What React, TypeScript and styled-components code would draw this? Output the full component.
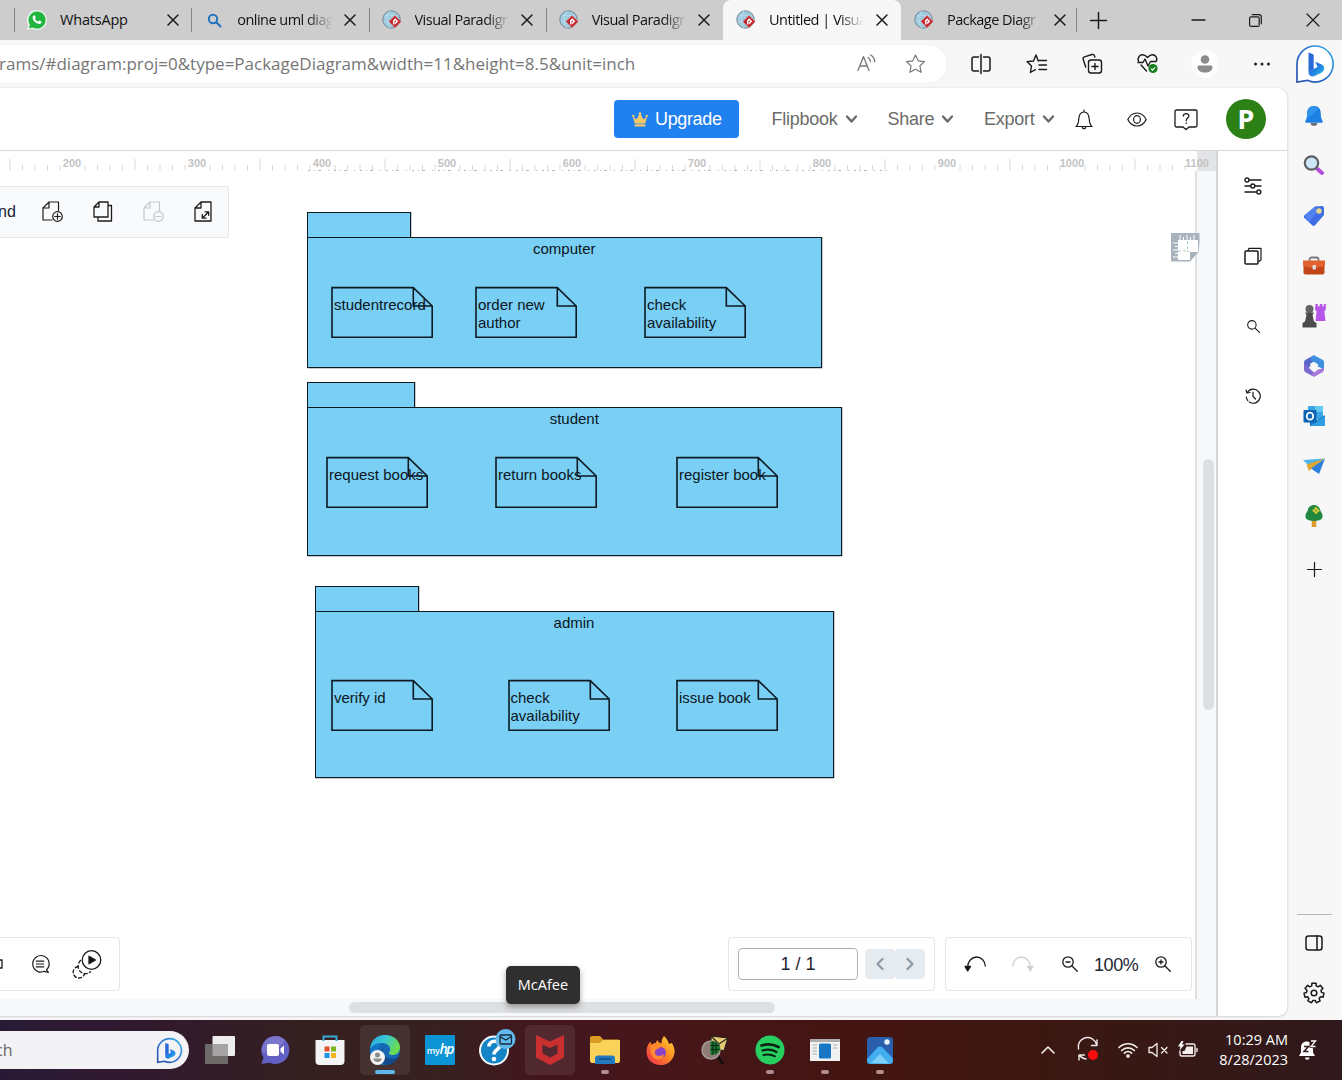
import React from "react";
import styled, { createGlobalStyle, css } from "styled-components";

const ui = `"Open Sans", "Noto Sans", sans-serif`;
const arial = `"Liberation Sans", Arial, sans-serif`;

const GlobalStyle = createGlobalStyle`
  * { box-sizing: border-box; }
  body { margin: 0; overflow: hidden; background: #f7f7f7; }
  svg { display: block; flex: none; overflow: visible; }
`;

/* ---------- window ---------- */

const Window = styled.div`
  width: 1342px;
  height: 1080px;
  display: flex;
  flex-direction: column;
  font-family: ${ui};
  color: #111;
  overflow: hidden;
`;

const TabStrip = styled.div`
  height: 40px;
  flex: none;
  display: flex;
  background: #cdcdcd;
`;

const TabEnd = styled.div`
  width: 14px;
  flex: none;
`;

const TabBox = styled.div<{ $active?: boolean; $line?: boolean; $w: number }>`
  width: ${(p) => p.$w}px;
  flex: none;
  display: flex;
  align-items: center;
  padding-left: 13px;
  background: ${(p) => (p.$active ? "#f7f7f7" : "transparent")};
  border-radius: 8px 8px 0 0;
  ${(p) =>
    p.$line &&
    css`
      background: linear-gradient(#868686, #868686) 0 8px / 1px 24px no-repeat;
      border-radius: 0;
    `}
`;

const TabTitle = styled.div<{ $fade?: boolean }>`
  width: 98px;
  margin-left: 13px;
  overflow: hidden;
  white-space: nowrap;
  font-size: 14.5px;
  line-height: 20px;
  letter-spacing: ${(p) => (p.$fade ? -0.52 : -0.2)}px;
  ${(p) => p.$fade && css`mask-image: linear-gradient(90deg, #000 72%, transparent 97%);`}
`;

const TabClose = styled.div`
  margin-left: 9.5px;
`;

const StripTail = styled.div`
  flex: 1;
  display: flex;
  align-items: center;
  padding-left: 12px;
  background: linear-gradient(#868686, #868686) 0 8px / 1px 24px no-repeat;
`;

const Spacer = styled.div<{ $w: number }>`
  width: ${(p) => p.$w}px;
  flex: none;
`;

const AddressRow = styled.div`
  height: 48px;
  flex: none;
  display: flex;
  align-items: center;
`;

const AddressField = styled.div`
  width: 947px;
  height: 38px;
  display: flex;
  align-items: center;
  background: #fff;
  border-radius: 0 19px 19px 0;
  box-shadow: 0 0 2px rgba(0, 0, 0, 0.08);
  color: #767676;
`;

const Url = styled.div`
  width: 858px;
  font-size: 17px;
  white-space: nowrap;
  margin-left: -1px;
  padding-bottom: 2px;
`;

const Slot = styled.div<{ $w: number; $h?: number }>`
  width: ${(p) => p.$w}px;
  ${(p) => p.$h && `height: ${p.$h}px;`}
  flex: none;
  display: flex;
  align-items: center;
  justify-content: center;
`;

const Avatar = styled.div`
  width: 28px;
  height: 28px;
  border-radius: 50%;
  background: #fdfdfd;
  display: flex;
  align-items: center;
  justify-content: center;
`;

const Main = styled.div`
  height: 932px;
  flex: none;
  display: flex;
`;

const Page = styled.div`
  width: 1288px;
  height: 929px;
  background: #fff;
  border-radius: 0 10px 10px 0;
  border-right: 1px solid #e6e6e6;
  border-bottom: 1px solid #dcdcde;
  display: flex;
  flex-direction: column;
  overflow: hidden;
  box-shadow: 0 0 2px rgba(0, 0, 0, 0.15);
`;

const AppHeader = styled.div`
  height: 63px;
  flex: none;
  display: flex;
  align-items: center;
  padding-left: 614px;
  border-bottom: 1px solid #d6d6d6;
  font-family: ${arial};
`;

const Upgrade = styled.button`
  width: 125px;
  height: 38px;
  border: 0;
  border-radius: 4px;
  background: #2180ef;
  color: #fff;
  display: flex;
  align-items: center;
  gap: 7px;
  padding: 0 0 0 18px;
  font: 18px ${arial};
  letter-spacing: -0.35px;
  margin-right: 32.5px;
`;

const MenuButton = styled.div<{ $w: number }>`
  width: ${(p) => p.$w}px;
  flex: none;
  display: flex;
  align-items: center;
  gap: 8px;
  color: #6b6b6b;
  font-size: 18px;
  letter-spacing: -0.25px;
`;

const UserBadge = styled.div`
  width: 40px;
  height: 40px;
  border-radius: 50%;
  background: #2c8016;
  color: #fff;
  font: 700 27px/39px "Noto Sans", sans-serif;
  text-align: center;
`;

const Workspace = styled.div`
  flex: 1;
  display: flex;
  min-height: 0;
`;

const Editor = styled.div`
  width: 1216px;
  flex: none;
  display: grid;
  grid-template-columns: 1195px 21px;
  grid-template-rows: 20px 828px 17px;
`;

const Ruler = styled.div`
  grid-column: 1 / 3;
  display: flex;
  overflow: hidden;
  background: linear-gradient(#e3e4e8, #e3e4e8) right top / 19px 100% no-repeat;
  position: relative;
`;

const RulerTicks = styled.svg`
  position: absolute;
  left: 0;
  top: 0;
`;

const RulerLabels = styled.div`
  display: flex;
  padding-left: 9.5px;
  position: relative;
`;

const RulerLabel = styled.div`
  width: 125px;
  flex: none;
  text-align: center;
  font: 700 11px/24px ${arial};
  color: #c3c3c3;
`;

const Canvas = styled.div`
  position: relative;
  background: #fff;
`;

const VTrack = styled.div`
  background: #f7f8fa;
  border-left: 2px solid #dedfe2;
  padding: 288px 2px 0 6px;
`;

const HTrack = styled.div`
  grid-column: 1 / 3;
  background: #f7f8fa;
  padding: 3px 0 0 349px;
`;

const Thumb = styled.div<{ $w: number; $h: number }>`
  width: ${(p) => p.$w}px;
  height: ${(p) => p.$h}px;
  border-radius: 6px;
  background: #dedfe1;
`;

const SidePanel = styled.div`
  flex: 1;
  border-left: 2px solid #d6d6da;
  padding-left: 1px;
  display: flex;
  flex-direction: column;
  align-items: center;
`;

/* ---------- diagram ---------- */

const PackageShape = styled.div<{ $x: number; $y: number; $w: number }>`
  position: absolute;
  left: ${(p) => p.$x}px;
  top: ${(p) => p.$y}px;
  width: ${(p) => p.$w}px;
`;

const PackageTab = styled.div<{ $w: number }>`
  width: ${(p) => p.$w}px;
  height: 26px;
  background: #7acff5;
  border: 1px solid #0d1a22;
  border-bottom: 0;
  box-shadow: 0.5px 0 0 rgba(13, 26, 34, 0.45);
`;

const PackageBody = styled.div<{ $h: number }>`
  height: ${(p) => p.$h}px;
  margin-top: -1px;
  background: #7acff5;
  border: 1px solid #0d1a22;
  box-shadow: 0.5px 0.5px 0 rgba(13, 26, 34, 0.45);
  position: relative;
  font: 15px/18px ${arial};
  color: #0b161d;
  text-align: center;
  padding-top: 2px;
`;

const NoteShape = styled.div<{ $x: number; $y: number }>`
  position: absolute;
  left: ${(p) => p.$x}px;
  top: ${(p) => p.$y}px;
  width: 102px;
  height: 52px;
  padding: 9px 0 0 3px;
  text-align: left;
  white-space: pre;
`;

const NoteOutline = styled.svg`
  position: absolute;
  left: 0;
  top: 0;
`;

/* ---------- floating bars ---------- */

const FloatBar = styled.div<{ $x: number; $y: number; $w: number; $h: number; $tint?: boolean }>`
  position: absolute;
  left: ${(p) => p.$x}px;
  top: ${(p) => p.$y}px;
  width: ${(p) => p.$w}px;
  height: ${(p) => p.$h}px;
  display: flex;
  align-items: center;
  padding-bottom: ${(p) => (p.$tint ? 1 : 0)}px;
  background: ${(p) => (p.$tint ? "#f9fafc" : "#fff")};
  border: 1px solid #e5e6e8;
  border-radius: ${(p) => (p.$tint ? 0 : 4)}px;
  font-family: ${arial};
  overflow: hidden;
`;

const RulerBadge = styled.svg`
  position: absolute;
  left: 1171px;
  top: 62px;
  z-index: 2;
`;

const BarText = styled.div`
  font-size: 16px;
  width: 30px;
  margin-left: -2px;
  color: #1c2430;
`;

const PageField = styled.div`
  width: 120px;
  height: 32px;
  border: 1px solid #aeb0b4;
  border-radius: 4px;
  margin: 0 7px 0 9px;
  font-size: 18px;
  line-height: 31px;
  text-align: center;
  color: #1d2733;
`;

const PageStep = styled.div`
  width: 30px;
  height: 30px;
  background: #e6ebf0;
  border-radius: 4px;
  display: flex;
  align-items: center;
  justify-content: center;
`;

const ZoomText = styled.div`
  width: 46px;
  margin: 0 4px 0 0;
  font-size: 18px;
  letter-spacing: -0.4px;
  color: #1d2733;
  padding-top: 3px;
`;

/* ---------- browser side bar ---------- */

const EdgeBar = styled.div`
  flex: 1;
  display: flex;
  flex-direction: column;
  align-items: center;
  padding: 3px 2px 0 0;
`;

const EdgeRule = styled.div`
  width: 35px;
  height: 1px;
  flex: none;
  margin-top: 317px;
  margin-bottom: 3px;
  background: #b9b9b9;
`;

/* ---------- task bar ---------- */

const Taskbar = styled.div`
  height: 60px;
  flex: none;
  position: relative;
  display: flex;
  align-items: center;
  background: linear-gradient(90deg, #281a35 0, #31192f 130px, #35201f 320px, #36211f 440px, #43161f 540px, #461618 700px, #431510 890px, #3a1813 1090px, #2f191c 1342px);
  color: #fff;
`;

const SearchBox = styled.div`
  width: 189px;
  height: 38px;
  flex: none;
  margin-right: 6px;
  background: #f3f2f5;
  border-radius: 0 19px 19px 0;
  display: flex;
  align-items: center;
  justify-content: space-between;
  padding: 0 7px 0 0;
  color: #666;
  font-size: 16px;
`;

const SearchText = styled.span`
  margin-left: -5px;
`;

const TaskItem = styled.div<{ $lit?: boolean }>`
  width: 50px;
  height: 50px;
  margin-right: 5px;
  flex: none;
  border-radius: 5px;
  background: ${(p) => (p.$lit ? "rgba(255,255,255,.08)" : "transparent")};
  display: flex;
  align-items: center;
  justify-content: center;
  position: relative;
`;

const RunMark = styled.div<{ $on?: boolean }>`
  position: absolute;
  bottom: 1px;
  left: ${(p) => (p.$on ? 15 : 21)}px;
  width: ${(p) => (p.$on ? 20 : 8)}px;
  height: 4px;
  border-radius: 2px;
  background: ${(p) => (p.$on ? "#5fb8ec" : "#b08d92")};
`;

const Tooltip = styled.div`
  position: absolute;
  left: 506px;
  top: -54px;
  width: 74px;
  height: 38px;
  border-radius: 5px;
  background: #2f2f2f;
  box-shadow: 0 3px 6px rgba(0, 0, 0, 0.35);
  font-size: 14.5px;
  line-height: 38px;
  text-align: center;
`;

const Tray = styled.div`
  margin-left: auto;
  display: flex;
  align-items: center;
`;

const Clock = styled.div`
  width: 80px;
  text-align: right;
  font-size: 14.5px;
  line-height: 20px;
  letter-spacing: 0;
  white-space: nowrap;
`;

/* ---------- icons ---------- */

const stroke = (w = 1.4, c = "#1a1a1a") => ({
  fill: "none",
  stroke: c,
  strokeWidth: w,
  strokeLinecap: "round" as const,
  strokeLinejoin: "round" as const,
});

const Cross = ({ s = 10, w = 1.5 }) => (
  <svg width={s} height={s} viewBox="0 0 10 10" {...stroke(w)}>
    <path d="M0 0l10 10M10 0L0 10" />
  </svg>
);

const WhatsApp = () => (
  <svg width="20" height="20" viewBox="0 0 20 20">
    <path d="M10 0a10 10 0 0 1 0 20 10 10 0 0 1-4.7-1.2L0 20l1.3-5A10 10 0 0 1 10 0z" fill="#e8f6ea" />
    <path d="M10 1.4a8.6 8.6 0 1 1-4.4 16L2 18.3l1-3.5A8.6 8.6 0 0 1 10 1.4z" fill="#1fb53f" />
    <path d="M6.8 5.5c.6-.3 1-.2 1.200.3l.8 1.700c.1.400-.7 1-.8 1.300.7 1.300 1.700 2.200 3.100 2.700.4 0 .9-1.200 1.300-1l1.900.9c.5.400-.1 1.700-.6 2.200-1.200 1-3.600.2-5.400-1.300C6.600 10.900 5.500 9 5.600 7.500c0-.8.500-1.700 1.200-2z" fill="#fff" />
  </svg>
);

const BlueSearch = () => (
  <svg width="14" height="14" viewBox="0 0 14 14" {...stroke(2, "#1f72be")}>
    <circle cx="6" cy="6" r="4.200" />
    <path d="M9.500 9.500l4 4" />
  </svg>
);

const Paradigm = () => (
  <svg width="20" height="20" viewBox="0 0 20 20">
    <circle cx="9.500" cy="9.500" r="8.700" fill="#9ecbe0" stroke="#74858f" strokeWidth="1" />
    <path d="M3 6c4-1 8-1 13 0M2 11c3 1.500 6 1.500 8 1.500M8 1C4 6 4 12 8 18" stroke="#b5dcec" fill="none" />
    <path d="M13 5.300l6.300 6.300-6.300 6.300-6.300-6.300z" fill="#c4282d" stroke="#dcc3c8" strokeWidth=".6" />
    <path d="M11.800 14.500v-3.600L13.200 9.300l2 2-2 2.200" stroke="#fff" strokeWidth="1.500" fill="none" />
  </svg>
);

const ReadAloud = () => (
  <svg width="20" height="18" viewBox="0 0 20 18" {...stroke(1.3, "#777")}>
    <path d="M1 15.500L6.500 1.500 12 15.500M3 11h7M11 2.500c1.500 1 2.300 2.300 2.500 4M13.500 0c2.500 1.300 4 3.500 4.200 6.500" />
  </svg>
);

const starPath = "M10 1l2.700 5.800 6.300.8-4.600 4.400 1.200 6.300L10 15.200l-5.600 3.100 1.200-6.300L1 7.600l6.300-.8z";

const Star = () => (
  <svg width="21" height="20" viewBox="0 0 20 20" {...stroke(1.2, "#777")}>
    <path d={starPath} />
  </svg>
);

const SplitScreen = () => (
  <svg width="20" height="20" viewBox="0 0 20 20" {...stroke(1.5)}>
    <path d="M7.500 3H3a2 2 0 0 0-2 2v10a2 2 0 0 0 2 2h4.500M10 0.500v19M12.500 3H17a2 2 0 0 1 2 2v10a2 2 0 0 1-2 2h-4.500" />
  </svg>
);

const Favorites = () => (
  <svg width="21" height="20" viewBox="0 0 21 20" {...stroke(1.4)}>
    <path d="M12.300 7L10 1 7.500 7 1 7.600l4.500 4.400-1.100 6.500 5-2.800M13 6.500h7.500M13 11h7.500M13 15.500h7.500" />
  </svg>
);

const Collections = () => (
  <svg width="20" height="20" viewBox="0 0 20 20" {...stroke(1.4)}>
    <rect x="6.500" y="6" width="13" height="13" rx="2.500" />
    <path d="M13 9.500v6M10 12.500h6M3.700 13L1.200 5.300a2 2 0 0 1 1.300-2.500L10 .5a2 2 0 0 1 2.500 1.300l.4 1.200" />
  </svg>
);

const Health = () => (
  <svg width="22" height="20" viewBox="0 0 22 20">
    <g {...stroke(1.400)}>
      <path d="M1.500 7.500C0 3 3 .8 5.500 .8 8 .8 9.500 2.500 10.500 3.500 11.500 2.500 13 .8 15.500 .8c3 0 5 3 4 6.200M4 11l5.500 6M1 8.500h5L8 5l3 7 2.500-4.500H19" />
    </g>
    <circle cx="16" cy="14.500" r="4.600" fill="#17801f" />
    <path d="M14 14.600l1.500 1.500 2.600-2.800" stroke="#fff" fill="none" strokeWidth="1.200" />
  </svg>
);

const Person = () => (
  <svg width="16" height="18" viewBox="0 0 16 18" fill="#8b8b8b">
    <circle cx="8" cy="4.500" r="4.300" />
    <path d="M2 10.500h12a1.500 1.500 0 0 1 1.500 1.500c0 3.500-3 5.500-7.500 5.500S.5 15.500.5 12A1.500 1.500 0 0 1 2 10.500z" />
  </svg>
);

const Dots = () => (
  <svg width="18" height="4" viewBox="0 0 18 4" fill="#222">
    <circle cx="2.500" cy="2" r="1.500" /><circle cx="9" cy="2" r="1.500" /><circle cx="15.500" cy="2" r="1.500" />
  </svg>
);

const Bing = ({ s = 38, bg = "#fff", id = "a" }) => (
  <svg width={s} height={s} viewBox="0 0 38 38">
    <defs>
      <linearGradient id={"bo" + id} x1="0" y1="1" x2="1" y2="0">
        <stop offset="0" stopColor="#2a4fae" /><stop offset=".5" stopColor="#2a6fd0" /><stop offset="1" stopColor="#35b5e8" />
      </linearGradient>
      <linearGradient id={"bi" + id} x1="0" y1="0" x2="1" y2="1">
        <stop offset="0" stopColor="#2d6be0" /><stop offset=".5" stopColor="#1f7fe0" /><stop offset="1" stopColor="#37c8ee" />
      </linearGradient>
    </defs>
    <path d="M19.500 1a18 18 0 1 1-8 34.300L1 37V19A18.200 18.200 0 0 1 19.500 1z" fill={bg} stroke={`url(#bo${id})`} strokeWidth={s < 30 ? 2.400 : 1.700} />
    <path d="M12.500 7.500l4.600 1.800c.4.200.6.500.6 1V24l-5.200 3.500z" fill="#2b68d8" />
    <path d="M12.500 27l5.200-3 3.800-2-2.300-5.300 6 2.500c4.200 1.800 3.700 6.500.3 8.500L18 31.300c-2.800 1-5.500-1-5.500-4.300z" fill={`url(#bi${id})`} />
  </svg>
);

const Crown = () => (
  <svg width="16" height="15" viewBox="0 0 18 17" fill="#f3c969">
    <path d="M1 5l4 3.500L9 1l4 7.500L17 5l-2 8H3zM3 14h12v2.500H3z" />
    <circle cx="1.500" cy="4.500" r="1.400" /><circle cx="16.500" cy="4.500" r="1.400" /><circle cx="9" cy="1.800" r="1.500" />
  </svg>
);

const Chevron = ({ d = "M1 1.500l4.500 5 4.500-5", w = 11, h = 8, c = "#6b6b6b", sw = 2.4 }) => (
  <svg width={w} height={h} viewBox={`0 0 ${w} ${h}`} {...stroke(sw, c)}><path d={d} /></svg>
);

const BellLine = () => (
  <svg width="18" height="21" viewBox="0 0 18 21" {...stroke(1.2)}>
    <path d="M9 1v1.500M1 17.500h16c-2-1.500-2.500-3-2.700-7C14 5.500 12 3 9 3s-5 2.500-5.300 7.500c-.2 4-.7 5.500-2.700 7zM7.300 18.500c.5 1.500 2.900 1.500 3.400 0" />
  </svg>
);

const Eye = () => (
  <svg width="20" height="15" viewBox="0 0 20 15" {...stroke(1.2)}>
    <path d="M.8 7.500C3 3 6.500 1 10 1s7 2 9.200 6.500C17 12 13.500 14 10 14S3 12 .8 7.500z" /><ellipse cx="10" cy="7.500" rx="3.400" ry="3.800" />
  </svg>
);

const HelpBox = () => (
  <svg width="24" height="21" viewBox="0 0 24 21" {...stroke(1.3)}>
    <path d="M2.500 1h19A1.500 1.500 0 0 1 23 2.500v14a1.500 1.500 0 0 1-1.500 1.500H15l-3 2.500L9 18H2.500A1.500 1.500 0 0 1 1 16.500v-14A1.500 1.500 0 0 1 2.500 1z" />
    <path d="M9.300 7c0-3.300 5.600-3.300 5.600 0 0 2-2.700 2.200-2.700 4.700M12.200 14v.3" />
  </svg>
);

const Sliders = () => (
  <svg width="18" height="18" viewBox="0 0 18 18" {...stroke(1.4)}>
    <circle cx="3" cy="3" r="2" /><path d="M5.500 3H17M1 9h5.500M11 9h6M1 15h11.500" /><circle cx="8.800" cy="9" r="2" /><circle cx="14.800" cy="15" r="2" />
  </svg>
);

const Layers = () => (
  <svg width="18" height="18" viewBox="0 0 18 18" {...stroke(1.5)}>
    <rect x="1" y="4" width="13" height="13" rx="1" /><path d="M4 3.500L5 1.300h12V13l-2 1.500" strokeWidth="1.200" />
  </svg>
);

const Glass = ({ sign = "", s = 16 }) => (
  <svg width={s} height={s} viewBox="0 0 16 16" {...stroke(1.3)}>
    <circle cx="6" cy="6" r="5.200" /><path d="M10 10l5.300 5.300" /><path d={sign} />
  </svg>
);

const History = () => (
  <svg width="16" height="16" viewBox="0 0 16 16" {...stroke(1.2)}>
    <path d="M2.300 4.500A7 7 0 1 1 1.300 9" strokeDasharray="33 2" /><path d="M1 2l1 3 3-.5M8 4v4.500l2.500 2.500" />
  </svg>
);

const DocIcon = ({ kind }: { kind: "add" | "copy" | "del" | "fit" }) => {
  const c = kind === "del" ? "#c3c5c8" : "#1c1c1c";
  if (kind === "copy")
    return (
      <svg width="20" height="21" viewBox="0 0 20 21" {...stroke(1.3, c)}>
        <path d="M6 1h9v15H1V6zM6 1v5H1M15 4.500h3.500V20H5v-4" />
      </svg>
    );
  if (kind === "fit")
    return (
      <svg width="18" height="21" viewBox="0 0 18 21" {...stroke(1.300, c)}>
        <path d="M7 1h10v19H1V7zM7 1v6H1M8.500 17l6-6M11 10.800h3.700v3.500M8.300 13.500v3.700H12" />
      </svg>
    );
  return (
    <svg width="21" height="21" viewBox="0 0 21 21" {...stroke(1.200, c)}>
      <path d="M16.500 9.500V1H7L1 7v12h9M7 1v6H1" /><circle cx="15.500" cy="15.500" r="4.800" />
      <path d={kind === "add" ? "M12.800 15.500h5.400M15.500 12.800v5.400" : "M12.800 15.500h5.400"} />
    </svg>
  );
};

const Comment = () => (
  <svg width="18" height="18" viewBox="0 0 18 18" {...stroke(1.200)}>
    <path d="M15.500 14.800A8.200 8.200 0 1 0 13.200 16.300L17.500 17.500 15.500 14.800z" />
    <path d="M5.300 6.200h7.500M5.300 9h7.500M5.300 11.800h7.500" />
  </svg>
);

const Present = () => (
  <svg width="29" height="29" viewBox="0 0 29 29" {...stroke(1.300)}>
    <circle cx="19.500" cy="10" r="9.300" /><path d="M17 6.200v7.600l6.500-3.800z" fill="#111" />
    <path d="M8.500 10.500C5 14 5.500 20 9.500 22.500c3 1.800 6.500 1.500 9-.7" strokeDasharray="3 2.500" />
    <path d="M6 16.500A5.800 5.800 0 1 0 12.500 24" strokeDasharray="3 2.500" />
  </svg>
);

const Undo = ({ flip = false }) => (
  <svg width="22" height="16" viewBox="0 0 22 16" {...stroke(1.3, flip ? "#cfd1d4" : "#1b1b1b")}>
    <g transform={flip ? "translate(22 0) scale(-1 1)" : undefined}>
      <path d="M3.500 11C4 5 8 1 12.500 1S21 4.500 21.300 10" /><path d="M1 10.500h5.500L3.700 15z" fill={flip ? "#cfd1d4" : "#111"} />
    </g>
  </svg>
);

const BlueBell = () => (
  <svg width="20" height="22" viewBox="0 0 20 22">
    <path d="M6.500 18h7c0 4-7 4-7 0z" fill="#6b7177" />
    <path d="M10 1c4.500 0 6.700 3 6.700 7 0 4 .6 5.500 2.100 8.300 0 1-.5 1.500-1.500 1.500H2.700c-1 0-1.500-.5-1.500-1.500C2.700 13.500 3.300 12 3.300 8c0-4 2.200-7 6.700-7z" fill="#1c80e2" />
    <path d="M10 1C5.500 1 3.300 4 3.300 8c0 2-.2 3.500-.6 4.700C7 11 13 7 14.500 2.700 13.400 1.600 11.800 1 10 1z" fill="#2f93ee" />
  </svg>
);

const PurpleSearch = () => (
  <svg width="22" height="22" viewBox="0 0 22 22">
    <path d="M14.500 14l4.500 4" stroke="#b44ae0" strokeWidth="4" strokeLinecap="round" />
    <circle cx="8.500" cy="8" r="6.700" fill="#cde6f7" stroke="#5c6065" strokeWidth="2.200" />
  </svg>
);

const Tag = () => (
  <svg width="22" height="22" viewBox="0 0 22 22">
    <path d="M12 1.500L19 1c1 0 2 .8 2 2v7L12 20.300c-.8.900-2 .9-2.800 0L1.500 13c-.9-.8-.9-2 0-2.800z" fill="#3f6de6" />
    <path d="M1.500 10.500L12 1.500l2 6-8 9.500z" fill="#5b8cf5" opacity=".7" /><circle cx="16" cy="6" r="2.700" fill="#ead98c" />
  </svg>
);

const Briefcase = () => (
  <svg width="24" height="20" viewBox="0 0 24 20">
    <path d="M7.500 5V3.500A2 2 0 0 1 9.500 1.500h5a2 2 0 0 1 2 2V5" fill="none" stroke="#74787c" strokeWidth="1.800" />
    <rect x="1.500" y="5" width="21" height="13.500" rx="2" fill="#c3461b" /><path d="M1 4.500h22v5c-6 3-16 3-22 0z" fill="#e2622d" /><rect x="10.500" y="9" width="3.500" height="4.500" rx="1" fill="#ddd" />
  </svg>
);

const Chess = () => (
  <svg width="24" height="24" viewBox="0 0 24 24">
    <path d="M13.500 0h2.300v2.300h2V0h2.500v2.300h1.500V0h2v5.500l-1.500 2 1.300 9.500H13.500l1-9.500-1.500-2z" fill="#b558ea" />
    <circle cx="7.500" cy="5" r="4" fill="#636363" /><path d="M3 8.500h9L10.500 11l1.500 6.500 2.500 1.500v4.500H.500V19L3 17.500 4.500 11z" fill="#4c4c4c" />
  </svg>
);

const Loop365 = () => (
  <svg width="22" height="22" viewBox="0 0 22 22">
    <path d="M11 .3L3 4.500C1.600 5.300 1 6.300 1 7.700V15l6.500-3.500V8.500L14 4.500z" fill="#5868c8" />
    <path d="M8 2l3-1.700 8.500 4.500c1 .6 1.500 1.600 1.500 2.800V14.500l-6-3V9.500L8 5.500z" fill="#3d8fe0" />
    <path d="M1 7.700V14.500c0 1.200.5 2.100 1.500 2.700L9.500 21c1 .6 2 .6 3 0l1.500-.8L7 14z" fill="#7b68d0" />
    <path d="M21 13v1.500c0 1.200-.5 2.100-1.500 2.700L12.500 21c-1 .6-2 .6-3 0L8 20l7-5.500z" fill="#a77bdc" />
    <path d="M7.500 9l3.500-2 3.500 2v4L11 15l-3.500-2z" fill="#f7f7f7" />
  </svg>
);

const Outlook = () => (
  <svg width="22" height="22" viewBox="0 0 22 22">
    <rect x="5" y="1" width="15" height="13" rx="1" fill="#37a5e6" /><path d="M12 1h8v6h-8z" fill="#63c8f2" />
    <path d="M6 10l8 5 8-5v10a1 1 0 0 1-1 1H7z" fill="#1675c2" /><path d="M7 21l15-10v9a1 1 0 0 1-1 1z" fill="#2d9ce0" />
    <rect x="0.500" y="5" width="13" height="12.500" rx="1" fill="#0b64b4" /><ellipse cx="7" cy="11.200" rx="3.200" ry="3.500" fill="none" stroke="#fff" strokeWidth="1.800" />
  </svg>
);

const Plane = () => (
  <svg width="22" height="18" viewBox="0 0 22 18">
    <path d="M0 3L22 1.500 6 9z" fill="#4db3e8" /><path d="M3.500 7.500L22 1.500 9 11l-3 3z" fill="#e0a630" /><path d="M22 1.500L8 11.500l8 5.500z" fill="#2b7fda" />
  </svg>
);

const Tree = () => (
  <svg width="18" height="24" viewBox="0 0 18 24">
    <rect x="6.700" y="15" width="4.600" height="8" fill="#e09c2f" /><path d="M9 1c4 0 6 3 6.500 6 2 2.500 3 6 1 8-2.500 2.500-12.500 2.500-15 0-2-2-1-5.500 1-8C3 4 5 1 9 1z" fill="#23883f" />
    <g fill="#d3cb37"><circle cx="11" cy="4.500" r="1.500" /><circle cx="11" cy="8.500" r="1.500" /><circle cx="9" cy="6.500" r="1.500" /><circle cx="13" cy="6.500" r="1.500" /></g>
  </svg>
);

const Plus = ({ s = 16, w = 1.4 }) => (
  <svg width={s} height={s} viewBox="0 0 16 16" {...stroke(w)}><path d="M8 .5v15M.5 8h15" /></svg>
);

const PanelIcon = () => (
  <svg width="18" height="16" viewBox="0 0 18 16" {...stroke(1.500)}><rect x="1" y="1" width="16" height="14" rx="2.500" /><path d="M12 1v14" /></svg>
);

const gearPath = Array.from({ length: 7 }, (_, i) => {
  const at = (deg: number, r: number) => {
    const a = ((deg + (i * 360) / 7 - 90) * Math.PI) / 180;
    return `${(11 + r * Math.cos(a)).toFixed(2)} ${(11 + r * Math.sin(a)).toFixed(2)}`;
  };
  return `${i ? "L" : "M"}${at(-12, 10)}L${at(12, 10)}L${at(17, 7.5)}L${at(34, 7.5)}`;
}).join("") + "Z";

const Gear = () => (
  <svg width="22" height="22" viewBox="0 0 22 22" {...stroke(1.500)}><path d={gearPath} /><circle cx="11" cy="11" r="2.800" /></svg>
);

const TaskView = () => (
  <svg width="30" height="28" viewBox="0 0 30 28">
    <rect x="7.500" y="0" width="22.500" height="20" rx="1" fill="#eeeded" /><rect x="0" y="8" width="23" height="20" rx="1" fill="#6d6a69" /><path d="M7.500 8H23v12H7.500z" fill="#a5a3a3" />
  </svg>
);

const Chat = () => (
  <svg width="29" height="28" viewBox="0 0 29 28">
    <path d="M14.500 0a14 14 0 1 1-6 26.700L.5 28l2-6.500A14 14 0 0 1 14.500 0z" fill="#6260c2" /><path d="M14.500 0a14 14 0 0 0-13 17C10 16 22 10 24 4a14 14 0 0 0-9.500-4z" fill="#8380d0" opacity=".7" />
    <rect x="6" y="8" width="12" height="12" rx="2" fill="#fff" /><path d="M19.500 12.500L23 9.500v9l-3.500-3z" fill="#fff" />
  </svg>
);

const Store = () => (
  <svg width="30" height="30" viewBox="0 0 30 30">
    <path d="M.5 5h29v21a4 4 0 0 1-4 4h-21a4 4 0 0 1-4-4z" fill="#f4f4f4" /><path d="M8.500 6V1.500h13V6" fill="none" stroke="#38a8db" strokeWidth="2" />
    <path d="M9.500 11.500h5v5h-5z" fill="#e0502e" /><path d="M16 11.500h5v5h-5z" fill="#7ab51d" /><path d="M9.500 18h5v5h-5z" fill="#1d97dd" /><path d="M16 18h5v5h-5z" fill="#f3b31c" />
  </svg>
);

const EdgeLogo = () => (
  <svg width="30" height="30" viewBox="0 0 30 30">
    <defs>
      <linearGradient id="eg" x1="0" y1="0" x2="1" y2=".4"><stop offset="0" stopColor="#2aa5e0" /><stop offset=".5" stopColor="#35c6d5" /><stop offset="1" stopColor="#6bdc51" /></linearGradient>
    </defs>
    <circle cx="15" cy="15" r="15" fill="#1767b5" />
    <path d="M0 14C1 5 7 0 15 0c9 0 15 6 15 12.500 0 5-3.500 7.500-7.500 7.500-3 0-4.500-1.500-3-3.500C22 13 18 8 12 8 6 8 2 11 0 14z" fill="url(#eg)" />
    <path d="M12 8c-2 2-3.500 6-2 10 2 6 8 9 17 5C24 28 19 30 15 30 6 30 0 23 0 14c3-4 7-6 12-6z" fill="#1476c4" />
    <path d="M14 13c-3 3-1 9 5 10.500 3 .8 6 .5 9-1.500-2 5-7 8-13 8-5-3-9-13-1-17z" fill="#114a8b" />
    <circle cx="7.500" cy="22.500" r="7.500" fill="#f3f3f3" /><circle cx="7.500" cy="20" r="2.500" fill="#8b8b8b" /><path d="M3.300 23.500h8.500c0 4.500-8.500 4.500-8.500 0z" fill="#8b8b8b" />
  </svg>
);

const MyHp = styled.div`
  width: 30px;
  height: 30px;
  background: #0b93d3;
  border-radius: 1px;
  font: 600 9px/28px ${ui};
  letter-spacing: -0.4px;
  text-align: center;
`;
const HpBig = styled.span`
  font-size: 14px;
  font-style: italic;
  font-weight: 600;
  letter-spacing: -1.4px;
`;

const HelpLogo = () => (
  <svg width="38" height="38" viewBox="0 0 38 38">
    <circle cx="18" cy="19.500" r="14" fill="#1384c5" stroke="#f4f7fa" strokeWidth="2" />
    <path d="M13 15.500c0-7 11-7 10.500-.5C23.500 18.500 18 19 18 23.500" fill="none" stroke="#fff" strokeWidth="3.600" /><circle cx="18" cy="28" r="2.300" fill="#fff" />
    <circle cx="29.500" cy="8" r="10" fill="#63b9ec" /><rect x="24" y="4" width="11.500" height="9" rx="1" fill="none" stroke="#142b3c" strokeWidth="1.300" /><path d="M24 5.500l5.700 3.500 5.800-3.500" fill="none" stroke="#142b3c" strokeWidth="1.300" />
  </svg>
);

const McAfee = () => (
  <svg width="28" height="30" viewBox="0 0 28 30">
    <path d="M0 0l14 6.500L28 0v22.500L14 30 0 22.500zM6.500 9.500V18.500L14 22.500l7.500-4V9.500L14 13z" fill="#c9302f" fillRule="evenodd" />
  </svg>
);

const Folder = () => (
  <svg width="30" height="28" viewBox="0 0 30 28">
    <path d="M0 2a2 2 0 0 1 2-2h8l3 3.500h15a2 2 0 0 1 2 2V10H0z" fill="#d99d22" /><path d="M0 7h10l3-3h17v21a2 2 0 0 1-2 2H2a2 2 0 0 1-2-2z" fill="#fad25a" />
    <path d="M5 28v-5.500a3 3 0 0 1 3-3h14a3 3 0 0 1 3 3V28z" fill="#2379bd" /><path d="M9 23h12" stroke="#0d4e88" strokeWidth="1.500" />
  </svg>
);

const Firefox = () => (
  <svg width="29" height="29" viewBox="0 0 29 29">
    <defs><linearGradient id="ff" x1="1" y1="0" x2="0" y2="1"><stop offset="0" stopColor="#fee13b" /><stop offset=".45" stopColor="#ff8b22" /><stop offset="1" stopColor="#ec2455" /></linearGradient></defs>
    <path d="M18 0c3 3 4 5 5 8l3-1c2 4 3 7 2.500 10A14 14 0 0 1 14.500 29C6 29 .5 23 .5 16c0-4 1-7.500 4-10.500l1 3.500C7 7.500 8 7 10 7c0-1.500 1-2.500 1.500-3 .5 2 2 3 4 3.500C15.500 5 16 2 18 0z" fill="url(#ff)" />
    <circle cx="14.500" cy="16.500" r="5.500" fill="#8b43c8" /><path d="M5 9c3-1 7 0 9 2.500-1 1.500-4 1-5 3.500s1 5 4 5c2 0 4-1 5-2 0 4-4 6-7 5.500C6 23 3 15 5 9z" fill="#ff8a30" />
  </svg>
);

const Inspector = () => (
  <svg width="30" height="30" viewBox="0 0 30 30">
    <path d="M11 1l17 2-4 13-13-4z" fill="#e5cc72" stroke="#262016" strokeWidth="1.200" /><path d="M11 1l8 8 9-6" fill="none" stroke="#262016" strokeWidth="1.200" />
    <path d="M17 20l6 9" stroke="#15100f" strokeWidth="3" /><circle cx="11" cy="15" r="9" fill="#8f7e78" stroke="#a69b96" strokeWidth="1.500" />
    <path d="M10.500 6.500c4-1 9 1 9.500 7 0 4-4 6.500-9.500 6.500z" fill="#18752e" /><path d="M13 6.500v13M16 7.500v11M10.500 10.500h9M10.500 14.500h9" stroke="#072a11" strokeWidth="1" />
  </svg>
);

const Spotify = () => (
  <svg width="30" height="30" viewBox="0 0 30 30">
    <circle cx="15" cy="15" r="14.500" fill="#27cf60" /><g {...stroke(2.800, "#0c2213")}><path d="M6.500 10.500c6-1.800 12-1.200 17 1.500" /><path d="M7.500 15.500c5-1.500 10-.8 14 1.500" strokeWidth="2.300" /><path d="M8.500 20c4-1 8-.5 11.500 1.300" strokeWidth="2" /></g>
  </svg>
);

const Browser = () => (
  <svg width="30" height="22" viewBox="0 0 30 22">
    <path d="M0 0h30v22H0z" fill="#f2f2f2" /><path d="M0 0h30v3H0z" fill="#adadad" /><rect x="9" y="4.500" width="12" height="15" rx="1.500" fill="#1976c5" />
    <path d="M2.500 6h4.500M2.500 9h4.500M2.500 12h4.500M2.500 15h4.500M23 6h4.500M23 9h4.500" stroke="#aaa" />
  </svg>
);

const Photos = () => (
  <svg width="26" height="27" viewBox="0 0 26 27">
    <rect width="26" height="27" rx="3.500" fill="#2a5fae" /><path d="M0 22L10.500 10.500c1.500-1.500 3.500-1.500 5 0L26 21.500V23.500a3.500 3.500 0 0 1-3.500 3.500h-19A3.500 3.500 0 0 1 0 23.500z" fill="#42aef0" />
    <path d="M4 26L13 17l9 9.500z" fill="#7fd0f8" /><circle cx="20" cy="5" r="2.700" fill="#e8f0fb" />
  </svg>
);

const Sync = () => (
  <svg width="22" height="22" viewBox="0 0 22 22">
    <g {...stroke(1.400, "#efe8e8")}><path d="M1.500 10A9 9 0 0 1 19.500 5.500M20 1v5.500h-5.500M9 20A9 9 0 0 1 2.500 16M2 21v-5h5.500" /></g><circle cx="16" cy="16" r="5" fill="#f80d0d" />
  </svg>
);

const Wifi = () => (
  <svg width="20" height="16" viewBox="0 0 20 16" {...stroke(1.700, "#f4eeee")}>
    <path d="M1 5.500c5-5 13-5 18 0M3.700 8.500c3.500-3.500 9-3.500 12.600 0M6.500 11.200c2-2 5-2 7 0" /><circle cx="10" cy="14" r="1" fill="#fff" />
  </svg>
);

const Mute = () => (
  <svg width="20" height="16" viewBox="0 0 20 16" {...stroke(1.300, "#f4eeee")}>
    <path d="M1 5.500h3L9 1.500v13l-5-4H1zM13.500 5.500l5.500 5.500M19 5.500L13.500 11" />
  </svg>
);

const Battery = () => (
  <svg width="20" height="16" viewBox="0 0 20 16">
    <g {...stroke(1.400, "#f4eeee")}><path d="M8 2h7.500A1.700 1.700 0 0 1 17 3.700v8.600a1.700 1.700 0 0 1-1.500 1.700h-12A1.700 1.700 0 0 1 2 12.300V9M19 6.500v3" /></g>
    <path d="M8.500 4.500H15V12H4.500V9h2z" fill="#f4eeee" /><path d="M3.500-1L0 4.500h2.500L1.500 8.500 6.500 2.500H4L5.500-1z" fill="#fff" />
  </svg>
);

const Snooze = () => (
  <svg width="18" height="20" viewBox="0 0 18 20">
    <path d="M8 1.500C4 1.500 2 4 2 7.500v5L0 16h16l-2-3.500V10l-1-7.500zM6 17.500h4.500c0 3-4.500 3-4.500 0z" fill="#fff" />
    <path d="M5 6.500h4.500l-4.500 5h4.500" fill="none" stroke="#2f191c" strokeWidth="1.500" /><path d="M10.500 0h7v8h-7z" fill="#2f191c" /><path d="M12 1h4.500l-4.500 5.500h4.500" fill="none" stroke="#fff" strokeWidth="1.300" />
  </svg>
);

/* ---------- composed parts ---------- */

const Tab = ({ icon, title, w = 177.25, active, line, fade = true }: { icon: React.ReactNode; title: string; w?: number; active?: boolean; line?: boolean; fade?: boolean }) => (
  <TabBox $w={w} $active={active} $line={line}>
    <Slot $w={20}>{icon}</Slot>
    <TabTitle $fade={fade}>{title}</TabTitle>
    <TabClose><Cross /></TabClose>
  </TabBox>
);

const Note = ({ x, y, text }: { x: number; y: number; text: string }) => (
  <NoteShape $x={x} $y={y}>
    {text}
    <NoteOutline width="102" height="52" viewBox="0 0 102 52" fill="none" stroke="#0d1a22" strokeWidth="1.600">
      <path d="M1 .6h81.300L101.200 19V50.300H1zM82.300.6v18.400h18.900" />
    </NoteOutline>
  </NoteShape>
);

interface PackageData { x: number; y: number; w: number; tab: number; h: number; name: string; noteY: number; notes: [number, string][] }

const packages: PackageData[] = [
  { x: 307, y: 212, w: 514.5, tab: 103.5, h: 131, name: "computer", noteY: 287, notes: [[331, "studentrecord"], [475, "order new\nauthor"], [644, "check\navailability"]] },
  { x: 307, y: 382, w: 534.5, tab: 107.5, h: 148.5, name: "student", noteY: 457, notes: [[326, "request books"], [495, "return books"], [676, "register book"]] },
  { x: 314.5, y: 586, w: 519, tab: 104.5, h: 167, name: "admin", noteY: 679.5, notes: [[331, "verify id"], [507.5, "check\navailability"], [676, "issue book"]] },
];

const canvasTop = 171;

const Package = ({ d }: { d: PackageData }) => (
  <PackageShape $x={d.x} $y={d.y - canvasTop} $w={d.w}>
    <PackageTab $w={d.tab} />
    <PackageBody $h={d.h}>
      {d.name}
      {d.notes.map(([nx, text]) => <Note key={nx} x={nx - d.x - 1} y={d.noteY - d.y - 26} text={text} />)}
    </PackageBody>
  </PackageShape>
);

const ticks = Array.from({ length: 96 }, (_, i) => i).filter((i) => i % 10 !== 5);

const taskItems: { icon: React.ReactNode; lit?: boolean; run?: "dot" | "bar" }[] = [
  { icon: <TaskView /> }, { icon: <Chat /> }, { icon: <Store /> },
  { icon: <EdgeLogo />, lit: true, run: "bar" },
  { icon: <MyHp>my<HpBig>hp</HpBig></MyHp> },
  { icon: <HelpLogo /> }, { icon: <McAfee />, lit: true },
  { icon: <Folder />, run: "dot" }, { icon: <Firefox /> }, { icon: <Inspector /> },
  { icon: <Spotify />, run: "dot" }, { icon: <Browser />, run: "dot" }, { icon: <Photos />, run: "dot" },
];

export default function App() {
  return (
    <Window>
      <GlobalStyle />
      <TabStrip>
        <TabEnd />
        <Tab icon={<WhatsApp />} title="WhatsApp" line fade={false} />
        <Tab icon={<BlueSearch />} title="online uml diag" line />
        <Tab icon={<Paradigm />} title="Visual Paradigr" line />
        <Tab icon={<Paradigm />} title="Visual Paradigr" line />
        <Tab icon={<Paradigm />} title="Untitled | Visua" active w={178} />
        <Tab icon={<Paradigm />} title="Package Diagr" w={175} />
        <StripTail>
          <Slot $w={20}><Plus s={17} /></Slot>
          <Spacer $w={83} />
          <Slot $w={14}><svg width="13" height="2" {...stroke(1.4)}><path d="M0 1h13" /></svg></Slot>
          <Spacer $w={43} />
          <Slot $w={14}><svg width="13" height="13" viewBox="0 0 13 13" {...stroke(1.200)}><rect x=".6" y="2.800" width="9.600" height="9.600" rx="1.500" /><path d="M3.200.7h6.500a2.600 2.600 0 0 1 2.600 2.600v6.500" /></svg></Slot>
          <Spacer $w={44} />
          <Slot $w={14}><Cross s={12} w={1} /></Slot>
        </StripTail>
      </TabStrip>

      <AddressRow>
        <AddressField>
          <Url>rams/#diagram:proj=0&amp;type=PackageDiagram&amp;width=11&amp;height=8.5&amp;unit=inch</Url>
          <ReadAloud />
          <Spacer $w={28} />
          <Star />
        </AddressField>
        <Spacer $w={6} />
        <Slot $w={56}><SplitScreen /></Slot>
        <Slot $w={55}><Favorites /></Slot>
        <Slot $w={55}><Collections /></Slot>
        <Slot $w={57}><Health /></Slot>
        <Slot $w={58}><Avatar><Person /></Avatar></Slot>
        <Slot $w={56}><Dots /></Slot>
        <Slot $w={50}><Bing id="top" /></Slot>
      </AddressRow>

      <Main>
        <Page>
          <AppHeader>
            <Upgrade><Crown />Upgrade</Upgrade>
            <MenuButton $w={116}>Flipbook<Chevron /></MenuButton>
            <MenuButton $w={96.5}>Share<Chevron /></MenuButton>
            <MenuButton $w={85}>Export<Chevron /></MenuButton>
            <Slot $w={30}><BellLine /></Slot>
            <Spacer $w={23} />
            <Slot $w={30}><Eye /></Slot>
            <Spacer $w={19} />
            <Slot $w={30}><HelpBox /></Slot>
            <Spacer $w={25} />
            <UserBadge>P</UserBadge>
          </AppHeader>
          <Workspace>
            <Editor>
              <Ruler>
                <RulerTicks width="1195" height="20" viewBox="0 0 1195 20" stroke="#d9d9db" strokeWidth="1">
                  {ticks.map((i) => <path key={i} d={`M${10 + i * 12.5} ${i % 10 === 0 ? 8 : 14}V19.500`} />)}
                  <path d="M308 19.500H890" stroke="#b9b9c6" strokeDasharray="2 4 1 3 3 7 1 5" />
                </RulerTicks>
                <RulerLabels>
                  {[200, 300, 400, 500, 600, 700, 800, 900, 1000, 1100].map((n) => <RulerLabel key={n}>{n}</RulerLabel>)}
                </RulerLabels>
              </Ruler>
              <Canvas>
                {packages.map((d) => <Package key={d.name} d={d} />)}
                <FloatBar $x={-1} $y={15} $w={230} $h={52} $tint>
                  <BarText>nd</BarText>
                  <Slot $w={52}><DocIcon kind="add" /></Slot>
                  <Slot $w={50}><DocIcon kind="copy" /></Slot>
                  <Slot $w={50}><DocIcon kind="del" /></Slot>
                  <Slot $w={50}><DocIcon kind="fit" /></Slot>
                </FloatBar>
                <RulerBadge width="29" height="29" viewBox="0 0 29 29">
                  <path d="M0 0h28.500v9L27.500 19 19 28.500H0z" fill="#a9b3bd" /><path d="M7 7h20v12h-8v8H7z" fill="#fff" />
                  <path d="M9 2v5M12.500 4v3M16 2v5M19.500 4v3M23 2v5M2 10h5M4 13.500h3M2 17h5M4 20.500h3M2 24h5" stroke="#fff" strokeWidth="1" />
                  <path d="M16.500 8v11M7 18h11" stroke="#a7d3bd" strokeDasharray="3 2" />
                </RulerBadge>
                <FloatBar $x={-5} $y={766} $w={125} $h={54}>
                  <Slot $w={8}><svg width="6" height="8" viewBox="0 0 6 8" {...stroke(1.300)}><path d="M0 0h5v8H0" /></svg></Slot>
                  <Spacer $w={17} />
                  <Slot $w={38}><Comment /></Slot>
                  <Slot $w={54}><Present /></Slot>
                </FloatBar>
                <FloatBar $x={728} $y={766} $w={207} $h={54}>
                  <PageField>1 / 1</PageField>
                  <PageStep><Chevron d="M6.500 1L1.500 6l5 5" w={8} h={12} c="#8d98a5" sw={2.200} /></PageStep>
                  <PageStep><Chevron d="M1.500 1l5 5-5 5" w={8} h={12} c="#8d98a5" sw={2.200} /></PageStep>
                </FloatBar>
                <FloatBar $x={945} $y={766} $w={247} $h={54}>
                  <Spacer $w={4} />
                  <Slot $w={50}><Undo /></Slot>
                  <Slot $w={46}><Undo flip /></Slot>
                  <Slot $w={48}><Glass sign="M4 6h4" /></Slot>
                  <ZoomText>100%</ZoomText>
                  <Slot $w={38}><Glass sign="M4 6h4M6 4v4" /></Slot>
                </FloatBar>
              </Canvas>
              <VTrack><Thumb $w={11} $h={251} /></VTrack>
              <HTrack><Thumb $w={426} $h={11} /></HTrack>
            </Editor>
            <SidePanel>
              <Slot $w={40} $h={70}><Sliders /></Slot>
              <Slot $w={40} $h={70}><Layers /></Slot>
              <Slot $w={40} $h={70}><Glass s={13} /></Slot>
              <Slot $w={40} $h={70}><History /></Slot>
            </SidePanel>
          </Workspace>
        </Page>
        <EdgeBar>
          {[BlueBell, PurpleSearch, Tag, Briefcase, Chess, Loop365, Outlook, Plane, Tree].map((Icon, i) => (
            <Slot key={i} $w={40} $h={50}><Icon /></Slot>
          ))}
          <Slot $w={40} $h={56}><Plus s={15} w={1.300} /></Slot>
          <EdgeRule />
          <Slot $w={40} $h={50}><PanelIcon /></Slot>
          <Slot $w={40} $h={50}><Gear /></Slot>
        </EdgeBar>
      </Main>

      <Taskbar>
        <SearchBox><SearchText>ch</SearchText><Bing s={25} bg="#f3f2f5" id="task" /></SearchBox>
        {taskItems.map((t, i) => (
          <TaskItem key={i} $lit={t.lit}>
            {t.icon}
            {t.run && <RunMark $on={t.run === "bar"} />}
          </TaskItem>
        ))}
        <Tray>
          <Slot $w={40}><Chevron d="M1 7l6-6 6 6" w={14} h={8} c="#f4eeee" sw={1.600} /></Slot>
          <Slot $w={40}><Sync /></Slot>
          <Slot $w={40}><Wifi /></Slot>
          <Slot $w={20}><Mute /></Slot>
          <Slot $w={40}><Battery /></Slot>
          <Clock>10:29 AM<br />8/28/2023</Clock>
          <Spacer $w={11} />
          <Snooze />
          <Spacer $w={25} />
        </Tray>
        <Tooltip>McAfee</Tooltip>
      </Taskbar>
    </Window>
  );
}
